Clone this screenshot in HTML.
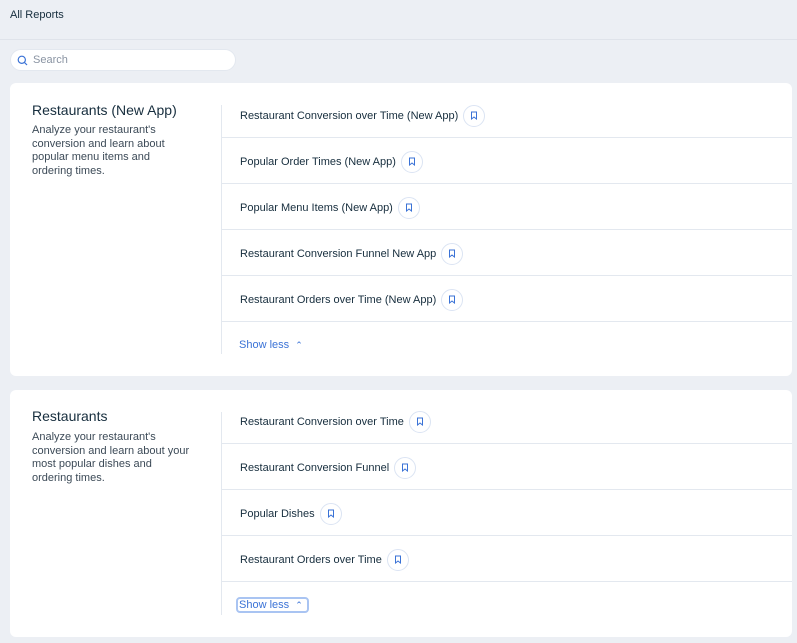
<!DOCTYPE html>
<html><head><style>
*{box-sizing:border-box;margin:0;padding:0}
body{width:797px;height:643px;background:#eceff4;font-family:"Liberation Sans",sans-serif;color:#162d3d;position:relative;overflow:hidden}
.hdr{position:absolute;left:0;top:0;width:797px;height:40px;border-bottom:1px solid #dfe3ea;font-size:11px;padding:9px 10px}
.search{position:absolute;left:10px;top:49px;width:226px;height:22px;background:#fff;border-radius:11px;border:1px solid #e3e8ef;font-size:11px;color:#8a94a3;padding:4px 0 0 22px}
.search svg{position:absolute;left:6px;top:5px}
.card{position:absolute;left:10px;width:782px;background:#fff;border-radius:6px}
.title{position:absolute;left:22px;font-size:14px;color:#162d3d}
.desc{position:absolute;left:22px;width:180px;font-size:11px;line-height:13.7px;color:#3c4a57;white-space:nowrap}
.div{position:absolute;left:211px;width:1px;background:#e3e8ef}
.row{position:absolute;left:212px;right:0;height:46px;border-bottom:1px solid #e3e8ef;font-size:11px;padding-left:18px;padding-top:2px;display:flex;align-items:center}
.bm{width:22px;height:22px;border:1px solid #dbe4f3;border-radius:50%;margin-left:5px;display:flex;align-items:center;justify-content:center}
.sl{position:absolute;left:229px;font-size:11px;color:#3a72d6}
.sl.f{outline:2px solid #a9c4f2;outline-offset:0;border-radius:2px;padding:0 1px;left:228px}
</style></head><body>
<div class="hdr">All Reports</div>
<div class="search"><svg width="11" height="11" viewBox="0 0 11 11"><circle cx="4.8" cy="4.8" r="3.6" fill="none" stroke="#3a72d6" stroke-width="1.2"/><path d="M7.5 7.5L10 10" stroke="#3a72d6" stroke-width="1.2"/></svg>Search</div>

<div class="card" style="top:83px;height:293px">
<div class="title" style="top:19px">Restaurants (New App)</div>
<div class="desc" style="top:41px">Analyze your restaurant's<br>conversion and learn about<br>popular menu items and<br>ordering times.</div>
<div class="div" style="top:22px;height:249px"></div>
<div class="row" style="top:9px">Restaurant Conversion over Time (New App)<span class="bm"><svg width="8" height="9"><path d="M1.5 1h5v7L4 6 1.5 8z" fill="none" stroke="#3a72d6"/></svg></span></div>
<div class="row" style="top:55px">Popular Order Times (New App)<span class="bm"><svg width="8" height="9"><path d="M1.5 1h5v7L4 6 1.5 8z" fill="none" stroke="#3a72d6"/></svg></span></div>
<div class="row" style="top:101px">Popular Menu Items (New App)<span class="bm"><svg width="8" height="9"><path d="M1.5 1h5v7L4 6 1.5 8z" fill="none" stroke="#3a72d6"/></svg></span></div>
<div class="row" style="top:147px">Restaurant Conversion Funnel New App<span class="bm"><svg width="8" height="9"><path d="M1.5 1h5v7L4 6 1.5 8z" fill="none" stroke="#3a72d6"/></svg></span></div>
<div class="row" style="top:193px">Restaurant Orders over Time (New App)<span class="bm"><svg width="8" height="9"><path d="M1.5 1h5v7L4 6 1.5 8z" fill="none" stroke="#3a72d6"/></svg></span></div>
<div class="sl" style="top:256px">Show less &nbsp;<span style="font-size:9px">&#8963;</span></div>
</div>

<div class="card" style="top:390px;height:247px">
<div class="title" style="top:18px">Restaurants</div>
<div class="desc" style="top:41px">Analyze your restaurant's<br>conversion and learn about your<br>most popular dishes and<br>ordering times.</div>
<div class="div" style="top:22px;height:203px"></div>
<div class="row" style="top:8px">Restaurant Conversion over Time<span class="bm"><svg width="8" height="9"><path d="M1.5 1h5v7L4 6 1.5 8z" fill="none" stroke="#3a72d6"/></svg></span></div>
<div class="row" style="top:54px">Restaurant Conversion Funnel<span class="bm"><svg width="8" height="9"><path d="M1.5 1h5v7L4 6 1.5 8z" fill="none" stroke="#3a72d6"/></svg></span></div>
<div class="row" style="top:100px">Popular Dishes<span class="bm"><svg width="8" height="9"><path d="M1.5 1h5v7L4 6 1.5 8z" fill="none" stroke="#3a72d6"/></svg></span></div>
<div class="row" style="top:146px">Restaurant Orders over Time<span class="bm"><svg width="8" height="9"><path d="M1.5 1h5v7L4 6 1.5 8z" fill="none" stroke="#3a72d6"/></svg></span></div>
<div class="sl f" style="top:209px">Show less &nbsp;<span style="font-size:9px">&#8963;</span>&nbsp;</div>
</div>
</body></html>
